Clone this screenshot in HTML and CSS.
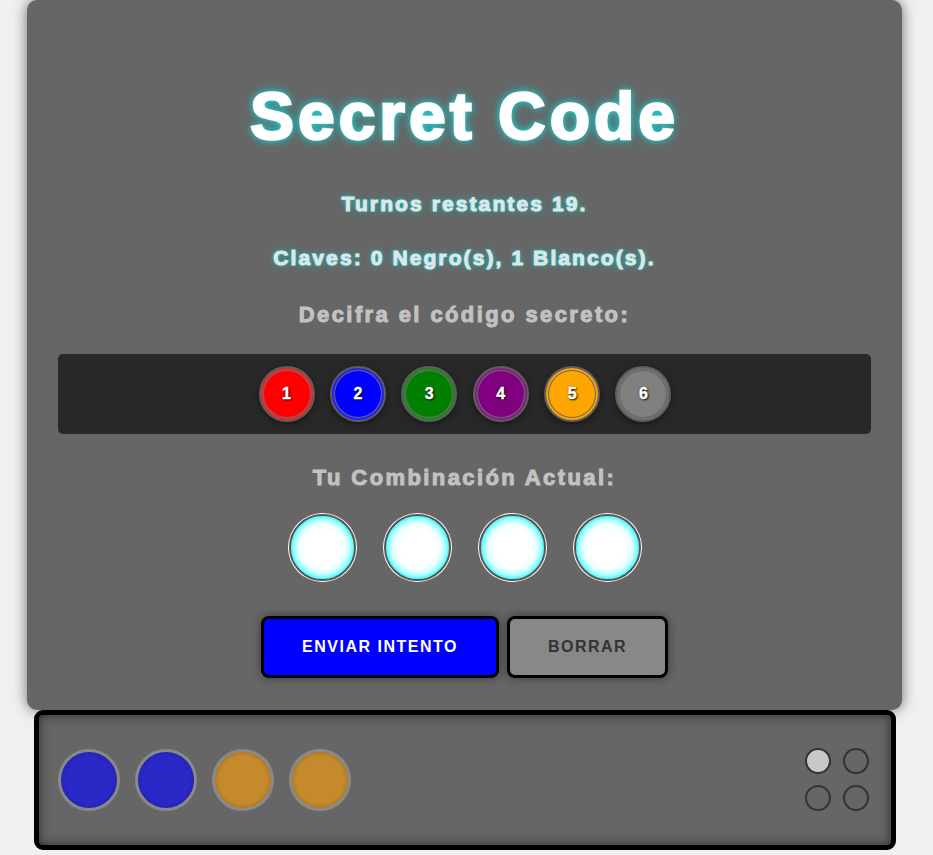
FILE: index.html
```html
<!DOCTYPE html>
<html lang="es">
<head>
<meta charset="utf-8">
<title>Secret Code</title>
<link rel="stylesheet" href="styles.css">
</head>
<body>
<main class="card">
  <h1 class="title">Secret Code</h1>
  <p class="status">Turnos restantes 19.</p>
  <p class="status status-keys">Claves: 0 Negro(s), 1 Blanco(s).</p>
  <h2 class="label label-first">Decifra el código secreto:</h2>
  <div class="palette">
    <button class="peg peg-red">1</button>
    <button class="peg peg-blue">2</button>
    <button class="peg peg-green">3</button>
    <button class="peg peg-purple">4</button>
    <button class="peg peg-orange">5</button>
    <button class="peg peg-gray">6</button>
  </div>
  <h2 class="label label-second">Tu Combinación Actual:</h2>
  <div class="slots">
    <div class="slot"></div>
    <div class="slot"></div>
    <div class="slot"></div>
    <div class="slot"></div>
  </div>
  <div class="actions">
    <button class="btn btn-send">ENVIAR INTENTO</button>
    <button class="btn btn-clear">BORRAR</button>
  </div>
</main>
<section class="history">
  <div class="guess">
    <span class="hpeg hpeg-blue"></span>
    <span class="hpeg hpeg-blue"></span>
    <span class="hpeg hpeg-orange"></span>
    <span class="hpeg hpeg-orange"></span>
  </div>
  <div class="keys">
    <span class="key key-white"></span>
    <span class="key"></span>
    <span class="key"></span>
    <span class="key"></span>
  </div>
</section>
</body>
</html>
```
FILE: styles.css
```css
* { box-sizing: border-box; }

html, body {
  margin: 0;
  padding: 0;
  background: #f0f0f0;
  font-family: "Liberation Sans", Arial, sans-serif;
}

body {
  padding-left: 27px;
  overflow: hidden;
  height: 855px;
}

.card {
  width: 875px;
  height: 710px;
  background: #666666;
  border-radius: 10px;
  box-shadow: 0 0 14px rgba(0, 0, 0, 0.55);
  padding: 76px 31px 0;
  display: flex;
  flex-direction: column;
  align-items: center;
}

.title {
  margin: 0;
  font-size: 66px;
  line-height: 80px;
  font-weight: 700;
  color: #ffffff;
  letter-spacing: 4px;
  -webkit-text-stroke: 2.4px #ffffff;
  text-shadow: 0 0 2px #44eeee, 0 0 6px #22dddd, 0 0 11px #11cccc;
}

.status {
  margin: 33px 0 0;
  font-size: 21px;
  line-height: 30px;
  font-weight: 700;
  color: #dfe6e6;
  letter-spacing: 2.1px;
  -webkit-text-stroke: 1px #dfe6e6;
  text-shadow: 0 0 3px #22cccc, 0 0 6px #11bbbb;
}

.status-keys { margin-top: 24px; }

.label {
  margin: 27px 0 0;
  font-size: 22px;
  line-height: 30px;
  font-weight: 700;
  color: #c2c2c2;
  letter-spacing: 2.4px;
  -webkit-text-stroke: 1px #c2c2c2;
}

.label-second { margin-top: 29px; }

.palette {
  margin-top: 24px;
  width: 813px;
  height: 80px;
  background: #282828;
  border-radius: 5px;
  display: flex;
  justify-content: center;
  align-items: center;
  gap: 15.4px;
  padding-left: 1px;
}

.peg {
  width: 56px;
  height: 56px;
  border-radius: 50%;
  border: 2px solid #5e5e5e;
  padding: 0;
  font-family: "Liberation Sans", Arial, sans-serif;
  font-size: 16px;
  font-weight: 700;
  color: #ffffff;
  -webkit-text-stroke: 0.4px #ffffff;
  text-shadow: 1px 1px 2px #000, 0 0 2px rgba(0,0,0,0.6);
  display: flex;
  align-items: center;
  justify-content: center;
}

.peg-red    { background: #ff0000; box-shadow: inset 0 0 0 2px #ff2020, inset 0 0 0 3px #6a6a6a, 0 2px 6px rgba(0,0,0,0.45); }
.peg-blue   { background: #0000ff; box-shadow: inset 0 0 0 2px #2020ff, inset 0 0 0 3px #6a6a6a, 0 2px 6px rgba(0,0,0,0.45); }
.peg-green  { background: #008000; box-shadow: inset 0 0 0 2px #1a8a1a, inset 0 0 0 3px #6a6a6a, 0 2px 6px rgba(0,0,0,0.45); }
.peg-purple { background: #800080; box-shadow: inset 0 0 0 2px #8a1a8a, inset 0 0 0 3px #6a6a6a, 0 2px 6px rgba(0,0,0,0.45); }
.peg-orange { background: #ffa500; box-shadow: inset 0 0 0 2px #ffa500, inset 0 0 0 3px #6a6a6a, 0 2px 6px rgba(0,0,0,0.45); }
.peg-gray   { background: #808080; box-shadow: inset 0 0 0 2px #707070, inset 0 0 0 3px #6a6a6a, 0 2px 6px rgba(0,0,0,0.45); }

.slots {
  margin-top: 21px;
  display: flex;
  gap: 28px;
}

.slot {
  width: 67px;
  height: 67px;
  border-radius: 50%;
  border: 2px solid #555555;
  box-shadow: 0 0 0 1px #ffffff, inset 0 0 12px #00ffff, inset 0 0 4px #00ffff;
  background: #ffffff;
}

.actions {
  margin-top: 35px;
  display: flex;
  gap: 8px;
}

.btn {
  height: 62px;
  border: 3px solid #000000;
  border-radius: 8px;
  font-family: "Liberation Sans", Arial, sans-serif;
  font-size: 16px;
  font-weight: 700;
  letter-spacing: 1.5px;
  box-shadow: 0 0 10px rgba(0, 0, 0, 0.45);
  padding: 0;
}

.btn-send {
  width: 238px;
  background: #0000ff;
  color: #ffffff;
}

.btn-clear {
  width: 161px;
  background: #888888;
  color: #333333;
}

.history {
  margin-left: 7px;
  width: 862px;
  height: 140px;
  border: 5px solid #000000;
  border-radius: 9px;
  background: #666666;
  box-shadow: inset 0 0 12px rgba(0, 0, 0, 0.55);
  display: flex;
  align-items: center;
  justify-content: space-between;
  padding: 0 22px 0 19px;
}

.guess {
  display: flex;
  gap: 15px;
}

.hpeg {
  width: 62px;
  height: 62px;
  border-radius: 50%;
  border: 3px solid #898989;
  box-shadow: inset 0 0 4px rgba(0, 0, 0, 0.25);
}

.hpeg-blue { background: #2a28c6; }
.hpeg-orange { background: #c48a2c; }

.keys {
  display: grid;
  grid-template-columns: 26px 26px;
  grid-template-rows: 26px 26px;
  column-gap: 12px;
  row-gap: 11px;
  margin-top: -2px;
}

.key {
  border-radius: 50%;
  border: 2px solid #333333;
}

.key-white { background: #c8c8c8; }
```
